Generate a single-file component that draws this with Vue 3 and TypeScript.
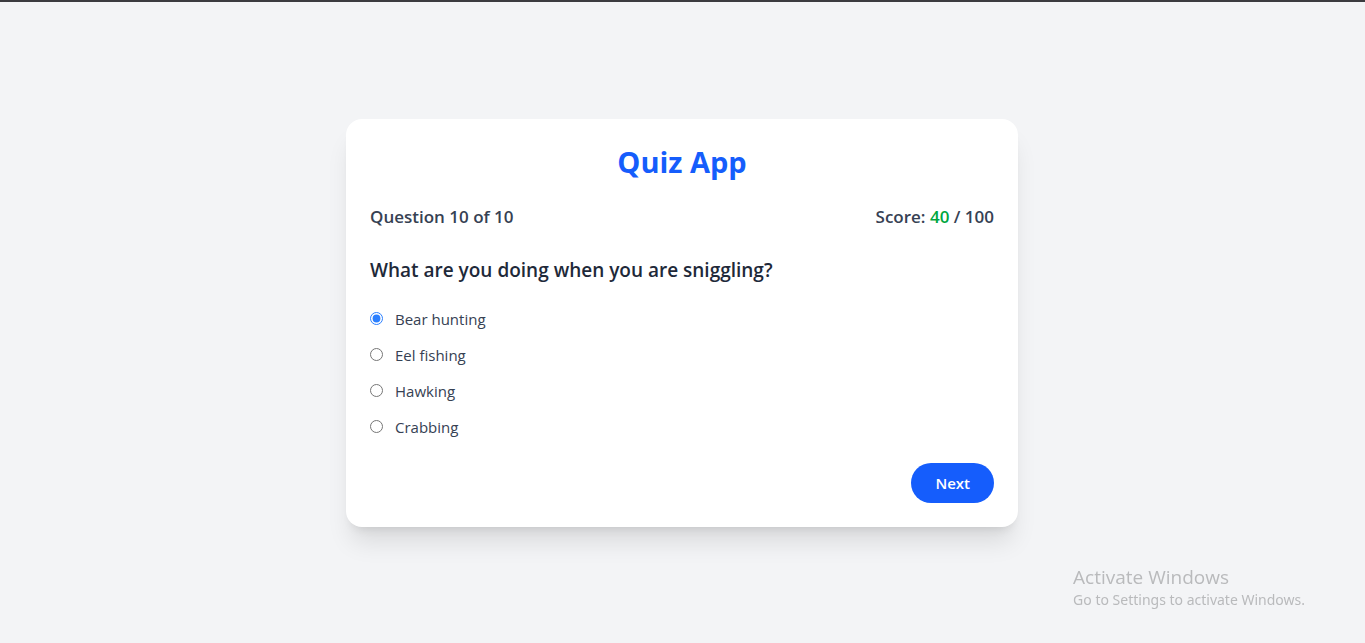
<script setup lang="ts">
import { ref } from 'vue'

const title = 'Quiz App'
const question = 'What are you doing when you are sniggling?'
const current = 10
const total = 10
const score = 40
const maxScore = 100
const options: string[] = ['Bear hunting', 'Eel fishing', 'Hawking', 'Crabbing']
const selected = ref<string>(options[0])
</script>

<template>
  <div class="page">
    <main class="card">
      <h1 class="title">{{ title }}</h1>
      <div class="status">
        <span>Question {{ current }} of {{ total }}</span>
        <span>Score: <span class="score">{{ score }}</span> / {{ maxScore }}</span>
      </div>
      <h2 id="question" class="question">{{ question }}</h2>
      <div class="options" role="radiogroup" aria-labelledby="question">
        <label v-for="(option, i) in options" :key="option" class="option" :for="`option-${i}`">
          <input :id="`option-${i}`" v-model="selected" class="radio" type="radio" name="answer" :value="option" />
          <span>{{ option }}</span>
        </label>
      </div>
      <div class="actions">
        <button type="button" class="next">Next</button>
      </div>
    </main>
    <aside class="notice">
      <p class="notice-title">Activate Windows</p>
      <p class="notice-text">Go to Settings to activate Windows.</p>
    </aside>
  </div>
</template>

<style>
body {
  margin: 0;
  background: #f3f4f6;
}
</style>

<style scoped>
.page {
  box-sizing: border-box;
  min-height: 100vh;
  padding: 1px 17px 0 16px;
  display: flex;
  align-items: center;
  justify-content: center;
  border-top: 2px solid #3b3b3f;
  background: #f3f4f6;
  font-family: "Segoe UI", "Open Sans", "Noto Sans", sans-serif;
  color: #1e2939;
}
.card {
  box-sizing: border-box;
  width: 100%;
  max-width: 672px;
  padding: 24px;
  border-radius: 16px;
  background: #fff;
  box-shadow: 0 20px 25px -5px rgba(0, 0, 0, 0.1), 0 8px 10px -6px rgba(0, 0, 0, 0.1);
}
.title {
  margin: 0 0 22px;
  font-size: 29px;
  line-height: 38px;
  font-weight: 700;
  text-align: center;
  color: #155dfc;
}
.status {
  display: flex;
  justify-content: space-between;
  margin-bottom: 24px;
  font-size: 17px;
  line-height: 28px;
  font-weight: 600;
  color: #364153;
}
.score {
  color: #00a63e;
}
.question {
  margin: 0 0 22px;
  font-size: 19px;
  line-height: 30px;
  font-weight: 600;
}
.options {
  display: flex;
  flex-direction: column;
  gap: 12px;
}
.option {
  display: flex;
  align-items: center;
  gap: 12px;
  font-size: 15px;
  line-height: 24px;
  color: #364153;
}
.radio {
  width: 13px;
  height: 13px;
  margin: 0 0 2px;
  accent-color: #2b7fff;
}
.actions {
  display: flex;
  justify-content: flex-end;
  margin-top: 24px;
}
.next {
  padding: 8px 24px;
  border: 0;
  border-radius: 20px;
  background: #155dfc;
  color: #fff;
  font-family: inherit;
  font-size: 15px;
  line-height: 24px;
  font-weight: 600;
}
.notice {
  position: fixed;
  right: 60px;
  bottom: 33px;
  color: #b9babc;
}
.notice p {
  margin: 0;
}
.notice-title {
  font-size: 19px;
  line-height: 26px;
}
.notice-text {
  font-family: "Segoe UI", "Noto Sans", sans-serif;
  font-size: 14px;
  line-height: 20px;
}
</style>
